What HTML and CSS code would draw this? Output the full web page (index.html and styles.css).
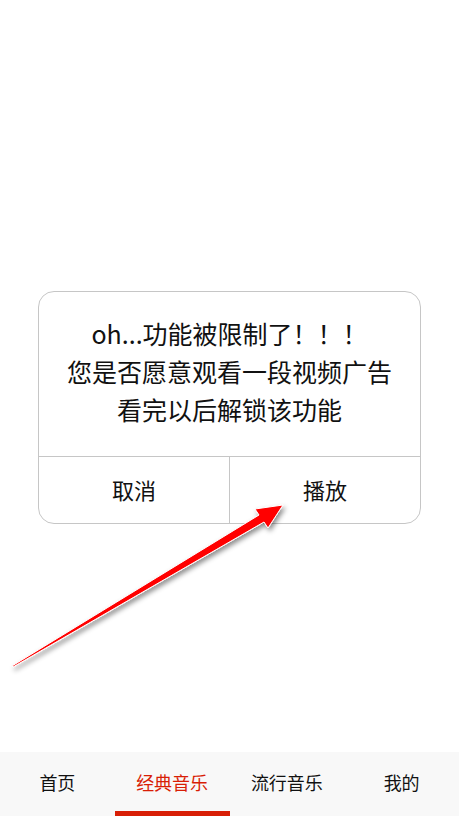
FILE: index.html
```html
<!DOCTYPE html>
<html lang="zh">
  <head>
    <meta charset="UTF-8" />
    <meta name="viewport" content="width=device-width, initial-scale=1.0" />
    <title>经典音乐</title>
    <link rel="stylesheet" href="styles.css">
  </head>
  <body>
    <main class="content">
      <section class="dialog">
        <div class="dialog-text">
          <p>oh...功能被限制了！！！</p>
          <p>您是否愿意观看一段视频广告</p>
          <p>看完以后解锁该功能</p>
        </div>
        <div class="dialog-buttons">
          <button class="dialog-btn">取消</button>
          <button class="dialog-btn">播放</button>
        </div>
      </section>
    </main>

    <nav class="tab-bar">
      <a class="tab">首页</a>
      <a class="tab active">经典音乐</a>
      <a class="tab">流行音乐</a>
      <a class="tab">我的</a>
    </nav>

    <!-- arrow drawn over the dialog -->
    <svg class="arrow" width="459" height="816" viewBox="0 0 459 816">
      <defs>
        <filter id="shadow" x="-10%" y="-10%" width="130%" height="130%">
          <feDropShadow dx="2" dy="3" stdDeviation="2.5" flood-color="#000" flood-opacity="0.45" />
        </filter>
      </defs>
      <polygon
        points="12,666 259,515 255,509 283,505 268,528 264,522 13,667"
        fill="#ff0000"
        stroke="#ffffff"
        stroke-width="1"
        stroke-linejoin="miter"
        filter="url(#shadow)"
      />
    </svg>
  </body>
</html>
```

FILE: styles.css
```css
html,
body {
  margin: 0;
  padding: 0;
}

body {
  width: 459px;
  height: 816px;
  display: flex;
  flex-direction: column;
  background: #fff;
  font-family: "Noto Sans CJK SC", "Noto Sans", sans-serif;
  color: #111;
  position: relative;
  overflow: hidden;
}

.content {
  flex: 1;
  padding-top: 291px;
  box-sizing: border-box;
}

.dialog {
  width: 383px;
  margin-left: 38px;
  height: 233px;
  box-sizing: border-box;
  border: 1px solid #c6c6c6;
  border-radius: 16px;
  display: flex;
  flex-direction: column;
  overflow: hidden;
}

.dialog-text {
  height: 164px;
  box-sizing: border-box;
  padding-bottom: 6px;
  display: flex;
  flex-direction: column;
  justify-content: center;
  text-align: center;
  font-size: 25px;
  line-height: 38px;
}

.dialog-text p {
  margin: 0;
}

.dialog-buttons {
  flex: 1;
  display: flex;
  border-top: 1px solid #c6c6c6;
}

.dialog-btn {
  flex: 1;
  background: none;
  border: none;
  font-family: inherit;
  font-size: 22px;
  color: #111;
  padding: 0 0 2px;
  cursor: pointer;
}

.dialog-btn + .dialog-btn {
  border-left: 1px solid #c6c6c6;
}

.tab-bar {
  height: 64px;
  background: #f8f8f8;
  display: flex;
}

.tab {
  flex: 1;
  display: flex;
  align-items: center;
  justify-content: center;
  font-size: 18px;
  color: #111;
  box-sizing: border-box;
  padding-top: 1px;
  border-bottom: 5px solid transparent;
}

.tab.active {
  color: #d81e06;
  border-bottom-color: #d81e06;
}

.arrow {
  position: absolute;
  left: 0;
  top: 0;
  pointer-events: none;
}
```
